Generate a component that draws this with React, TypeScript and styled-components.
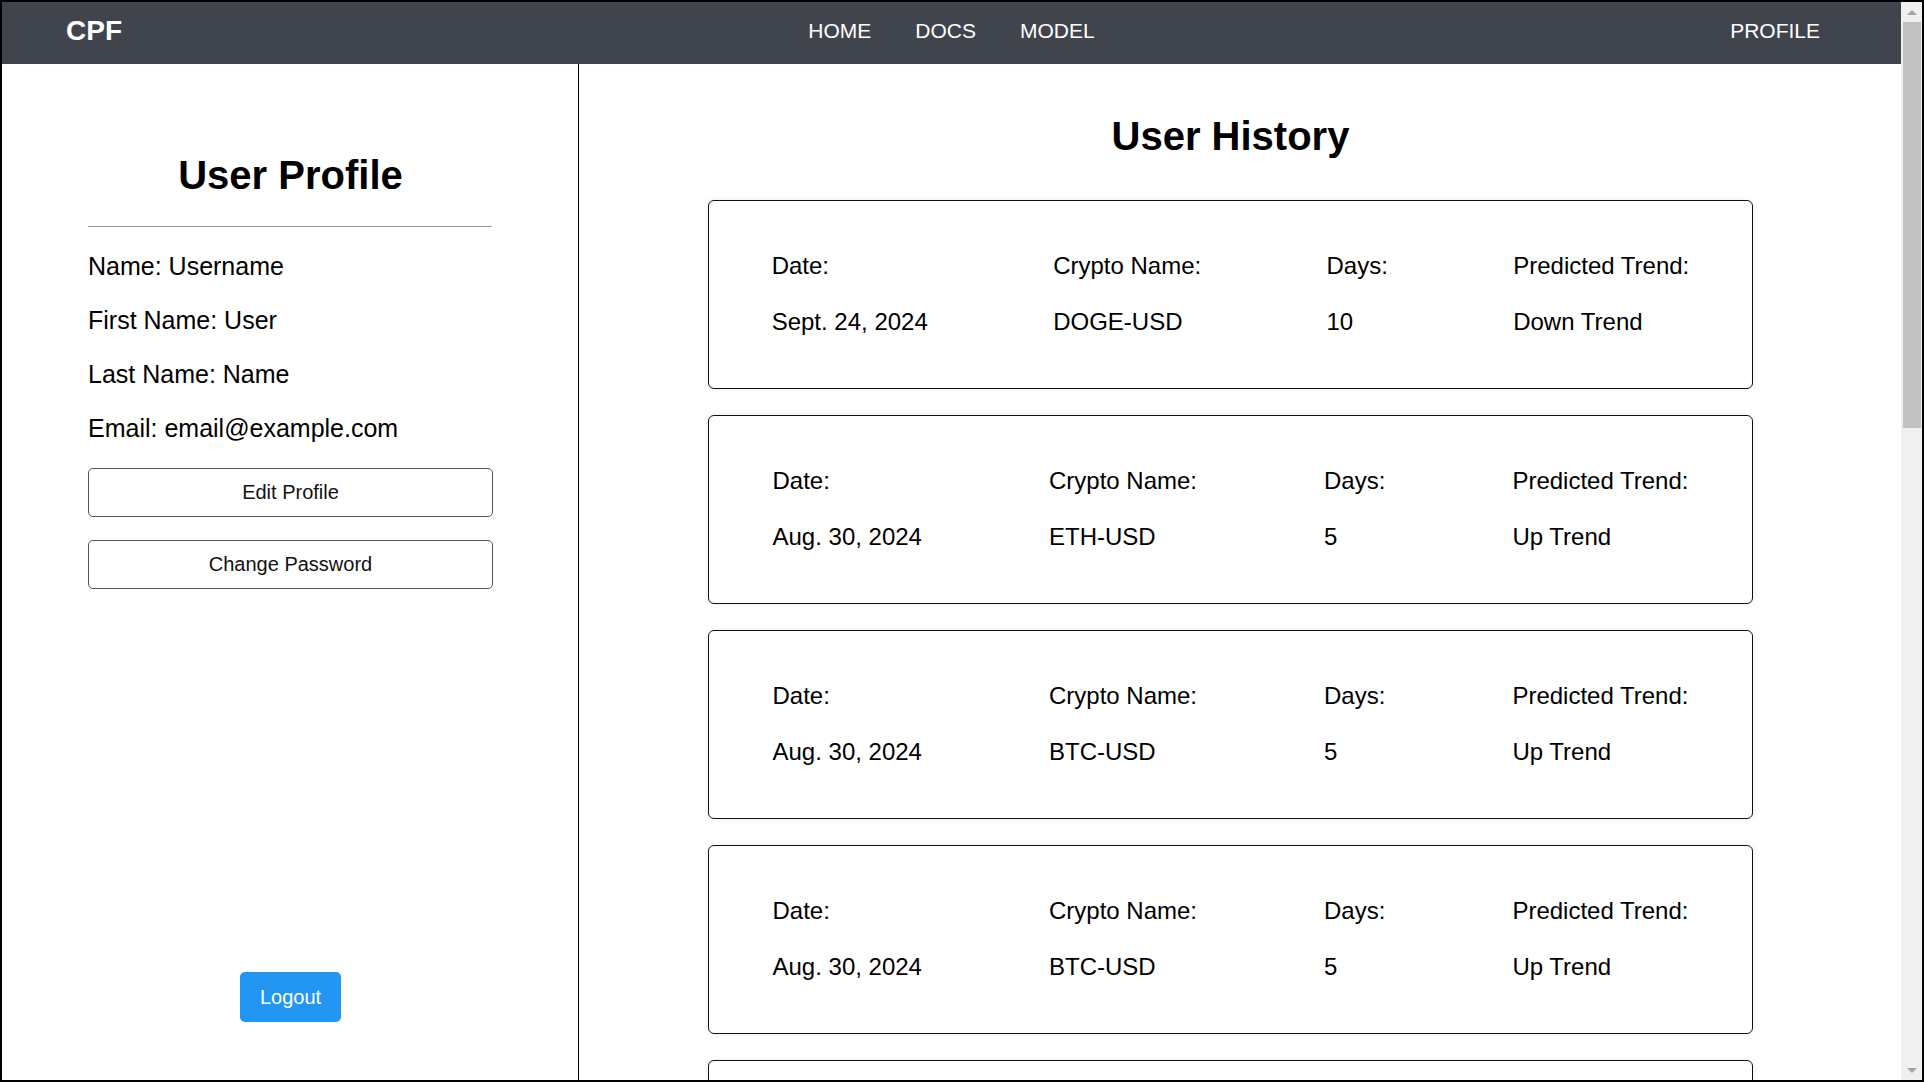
import styled, { createGlobalStyle } from "styled-components";

const GlobalStyle = createGlobalStyle`
  * {
    box-sizing: border-box;
  }

  html,
  body {
    margin: 0;
    padding: 0;
    background-color: #000;
    font-family: "Liberation Sans", Arial, sans-serif;
  }
`;

const Frame = styled.div`
  height: 100vh;
  border: 2px solid #000;
  background-color: #fff;
  display: flex;
  overflow: hidden;
`;

const Page = styled.div`
  flex: 1;
  min-width: 0;
  overflow: hidden;
`;

const ScrollTrack = styled.div`
  flex: 0 0 21px;
  background-color: #f0f0f0;
  display: flex;
  flex-direction: column;
`;

const ScrollArrow = styled.div<{ $down?: boolean }>`
  height: 20px;
  display: flex;
  align-items: center;
  justify-content: center;
  margin-top: ${(p) => (p.$down ? "auto" : "0")};

  &::before {
    content: "";
    border-left: 5px solid transparent;
    border-right: 5px solid transparent;
    ${(p) =>
      p.$down
        ? "border-top: 5px solid #a3a3a3;"
        : "border-bottom: 5px solid #a3a3a3;"}
  }
`;

const ScrollThumb = styled.div`
  margin: 0 1px 0 2px;
  background-color: #c1c1c1;
`;

const NavBar = styled.nav`
  height: 62px;
  padding: 0 64px 4px;
  display: grid;
  grid-template-columns: 1fr auto 1fr;
  align-items: center;
  background-color: rgb(64, 68, 76);
  color: #fff;
`;

const Brand = styled.div`
  font-size: 28px;
  font-weight: bold;
`;

const NavLinks = styled.div`
  display: flex;
  gap: 44px;
`;

const NavLink = styled.a<{ $right?: boolean }>`
  font-size: 21px;
  color: #fff;
  text-decoration: none;
  cursor: pointer;
  justify-self: ${(p) => (p.$right ? "end" : "auto")};
  margin-right: ${(p) => (p.$right ? "17px" : "0")};
`;

const Body = styled.div`
  display: flex;
  align-items: flex-start;
`;

const ProfilePanel = styled.aside`
  flex: 0 0 577px;
  height: 1016px;
  padding: 88px 85px 58px 86px;
  border-right: 1px solid #000;
  display: flex;
  flex-direction: column;
`;

const Heading = styled.h1`
  margin: 0;
  font-size: 40px;
  line-height: 46px;
  font-weight: bold;
  text-align: center;
  color: #000;
`;

const Rule = styled.hr`
  margin: 28px 0 0;
  border: 0;
  border-top: 1px solid #9a9a9a;
  width: 404px;
`;

const InfoList = styled.div`
  margin-top: 25px;
  display: flex;
  flex-direction: column;
  gap: 25px;
`;

const InfoLine = styled.p`
  margin: 0;
  font-size: 25px;
  line-height: 29px;
  color: #000;
`;

const OutlineButton = styled.button<{ $first?: boolean }>`
  width: 405px;
  height: 49px;
  margin-top: ${(p) => (p.$first ? "25px" : "23px")};
  border: 1px solid #555;
  border-radius: 5px;
  background-color: #fff;
  color: #111;
  font-family: inherit;
  font-size: 20px;
  cursor: pointer;
`;

const LogoutButton = styled.button`
  margin-top: auto;
  align-self: center;
  width: 101px;
  height: 50px;
  border: 0;
  border-radius: 5px;
  background-color: #2196f3;
  color: #fff;
  font-family: inherit;
  font-size: 20px;
  cursor: pointer;
`;

const HistoryPanel = styled.main`
  flex: 1;
  padding: 49px 148px 40px 129px;
`;

const HistoryList = styled.div`
  margin-top: 41px;
  display: flex;
  flex-direction: column;
  gap: 26px;
`;

const Card = styled.div`
  height: 189px;
  flex-shrink: 0;
  padding: 51px 0 0;
  border: 1px solid #111;
  border-radius: 6px;
  box-shadow: 0 0 6px rgba(0, 0, 0, 0.08);
  display: flex;
  justify-content: space-around;
  align-items: flex-start;
`;

const Field = styled.div`
  display: flex;
  flex-direction: column;
  gap: 28px;
  font-size: 24px;
  line-height: 28px;
  color: #000;
  white-space: nowrap;
`;

type Entry = { date: string; crypto: string; days: number; trend: string };

const history: Entry[] = [
  { date: "Sept. 24, 2024", crypto: "DOGE-USD", days: 10, trend: "Down Trend" },
  { date: "Aug. 30, 2024", crypto: "ETH-USD", days: 5, trend: "Up Trend" },
  { date: "Aug. 30, 2024", crypto: "BTC-USD", days: 5, trend: "Up Trend" },
  { date: "Aug. 30, 2024", crypto: "BTC-USD", days: 5, trend: "Up Trend" },
];

const HistoryCard = ({ entry }: { entry?: Entry }) => (
  <Card>
    {entry && (
      <>
        <Field>
          <span>Date:</span>
          <span>{entry.date}</span>
        </Field>
        <Field>
          <span>Crypto Name:</span>
          <span>{entry.crypto}</span>
        </Field>
        <Field>
          <span>Days:</span>
          <span>{entry.days}</span>
        </Field>
        <Field>
          <span>Predicted Trend:</span>
          <span>{entry.trend}</span>
        </Field>
      </>
    )}
  </Card>
);

const App = () => {
  return (
    <>
      <GlobalStyle />
      <Frame>
        <Page>
          <NavBar>
            <Brand>CPF</Brand>
            <NavLinks>
              <NavLink>HOME</NavLink>
              <NavLink>DOCS</NavLink>
              <NavLink>MODEL</NavLink>
            </NavLinks>
            <NavLink $right>PROFILE</NavLink>
          </NavBar>

          <Body>
            <ProfilePanel>
              <Heading>User Profile</Heading>
              <Rule />
              <InfoList>
                <InfoLine>Name: Username</InfoLine>
                <InfoLine>First Name: User</InfoLine>
                <InfoLine>Last Name: Name</InfoLine>
                <InfoLine>Email: email@example.com</InfoLine>
              </InfoList>
              <OutlineButton $first>Edit Profile</OutlineButton>
              <OutlineButton>Change Password</OutlineButton>
              <LogoutButton>Logout</LogoutButton>
            </ProfilePanel>

            <HistoryPanel>
              <Heading>User History</Heading>
              <HistoryList>
                {history.map((entry, i) => (
                  <HistoryCard key={i} entry={entry} />
                ))}
                {/* next entry, scrolled below the fold */}
                <HistoryCard />
              </HistoryList>
            </HistoryPanel>
          </Body>
        </Page>

        <ScrollTrack>
          <ScrollArrow />
          <ScrollThumb style={{ height: 406 }} />
          <ScrollArrow $down />
        </ScrollTrack>
      </Frame>
    </>
  );
};

export default App;
